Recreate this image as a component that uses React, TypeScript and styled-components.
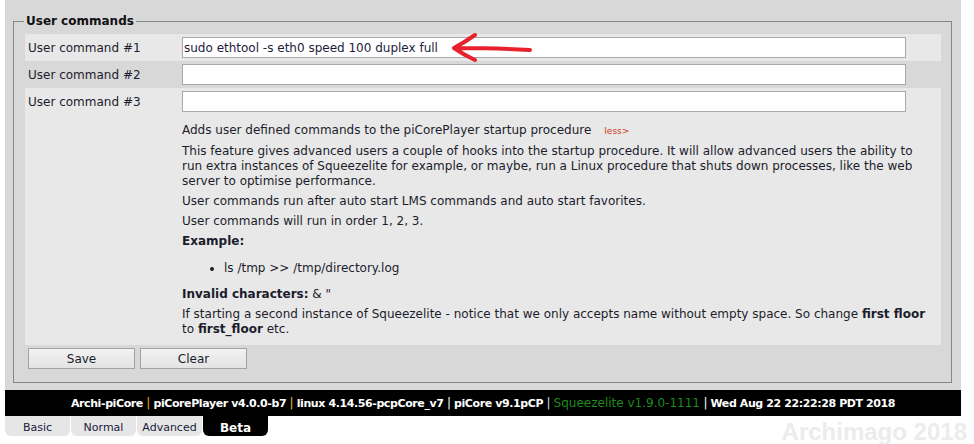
import React from "react";
import styled, { createGlobalStyle } from "styled-components";

const Global = createGlobalStyle`
  html, body { margin: 0; padding: 0; background: #ffffff; }
  body { font-family: "DejaVu Sans", Verdana, sans-serif; font-size: 12px; color: #1c1c2c; }
`;

const Page = styled.div`
  width: 974px;
  height: 444px;
  overflow: hidden;
  padding-left: 5px;
  box-sizing: border-box;
`;

const Panel = styled.div`
  width: 956px;
  background: #d8d8d8;
  padding: 14px 9px 7px 8px;
  box-sizing: border-box;
`;

const FieldSet = styled.fieldset`
  margin: 0;
  border: 1px solid #868686;
  padding: 6px 10px 13px 11px;
  min-width: 0;
`;

const Legend = styled.legend`
  font-weight: bold;
  font-size: 12px;
  padding: 0 2px;
  margin-left: -1px;
  color: #111;
`;

const Row = styled.div<{ $alt?: boolean }>`
  position: relative;
  display: flex;
  align-items: center;
  height: 27px;
  background: ${(p) => (p.$alt ? "#e8e8e8" : "transparent")};
`;

const Label = styled.div`
  width: 154px;
  padding-left: 3px;
  box-sizing: border-box;
  flex: none;
`;

const TextInput = styled.input`
  box-sizing: border-box;
  width: 724px;
  height: 21px;
  margin-left: 3px;
  border: 1px solid #a9a9a9;
  background: #fff;
  padding: 0 1px;
  font-family: "DejaVu Sans", Verdana, sans-serif;
  font-size: 12px;
  color: #1c1c3c;
  outline: none;
`;

const Arrow = styled.svg`
  position: absolute;
  left: 422px;
  top: -3px;
`;

const Group = styled.div`
  background: #e8e8e8;
`;

const Help = styled.div`
  padding: 8px 6px 8px 157px;
  line-height: 15px;
`;

const P = styled.p<{ $last?: boolean }>`
  margin: 0 0 ${(p) => (p.$last ? "0" : "5px")} 0;
`;

const Less = styled.span`
  color: #d23a1e;
  font-size: 9px;
  margin-left: 13px;
`;

const List = styled.ul`
  margin: 12px 0 11px 0;
  padding: 0 0 0 42px;
  list-style: disc outside;
`;

const ButtonRow = styled.div`
  display: flex;
  gap: 5px;
  padding: 3px 0 0 3px;
`;

const Button = styled.button`
  width: 107px;
  height: 21px;
  border: 1px solid #a3a3a3;
  background: linear-gradient(#f2f2f2, #e3e3e3);
  font-family: "DejaVu Sans", Verdana, sans-serif;
  font-size: 12px;
  color: #1c1c2c;
  padding: 0;
`;

const Footer = styled.div`
  width: 956px;
  height: 26px;
  background: #000;
  display: flex;
  align-items: center;
  justify-content: center;
`;

const FooterText = styled.span`
  color: #fff;
  font-family: "DejaVu Sans", sans-serif;
  font-weight: bold;
  font-size: 11px;
  white-space: pre;
  letter-spacing: -0.4px;
`;

const Sep = styled.span<{ $c: string }>`
  color: ${(p) => p.$c};
  font-weight: normal;
  font-size: 12px;
`;

const Green = styled.span`
  color: #1e8a1e;
  font-weight: normal;
  font-size: 12px;
  letter-spacing: 0;
`;

const TabBar = styled.div`
  display: flex;
  align-items: flex-start;
  width: 962px;
`;

const Tab = styled.div<{ $active?: boolean }>`
  width: 65px;
  height: 20px;
  margin-right: 1px;
  border-radius: 0 0 6px 6px;
  display: flex;
  align-items: center;
  justify-content: center;
  padding-top: 3px;
  box-sizing: border-box;
  font-size: ${(p) => (p.$active ? "12px" : "11px")};
  font-weight: ${(p) => (p.$active ? "bold" : "normal")};
  background: ${(p) => (p.$active ? "#000" : "#e6e6e6")};
  color: ${(p) => (p.$active ? "#fff" : "#1a1a3a")};
`;

const Watermark = styled.div`
  margin-left: auto;
  margin-top: 2px;
  font-family: "Liberation Sans", Arial, sans-serif;
  font-weight: bold;
  font-size: 24px;
  color: #ececec;
`;

export default function App() {
  return (
    <Page>
      <Global />
      <Panel>
        <FieldSet>
          <Legend>User commands</Legend>
          <Row $alt>
            <Label>User command #1</Label>
            <TextInput readOnly value="sudo ethtool -s eth0 speed 100 duplex full" />
            <Arrow width="90" height="33" viewBox="0 0 90 33">
              <path
                d="M83 19 Q50 17 8 17 M28 4 Q18 11 7 17 Q17 24 28 29"
                fill="none"
                stroke="#e8222c"
                strokeWidth="4"
                strokeLinecap="round"
                strokeLinejoin="round"
              />
            </Arrow>
          </Row>
          <Row>
            <Label>User command #2</Label>
            <TextInput readOnly value="" />
          </Row>
          <Group>
            <Row>
              <Label>User command #3</Label>
              <TextInput readOnly value="" />
            </Row>
            <Help>
              <P>
                Adds user defined commands to the piCorePlayer startup procedure<Less>less&gt;</Less>
              </P>
              <P>
                This feature gives advanced users a couple of hooks into the startup procedure. It will allow advanced users the ability to run extra instances of Squeezelite for example, or maybe, run a Linux procedure that shuts down processes, like the web server to optimise performance.
              </P>
              <P>User commands run after auto start LMS commands and auto start favorites.</P>
              <P>User commands will run in order 1, 2, 3.</P>
              <P>
                <b>Example:</b>
              </P>
              <List>
                <li>ls /tmp &gt;&gt; /tmp/directory.log</li>
              </List>
              <P>
                <b>Invalid characters:</b> &amp; "
              </P>
              <P $last>
                If starting a second instance of Squeezelite - notice that we only accepts name without empty space. So change <b>first floor</b> to <b>first_floor</b> etc.
              </P>
            </Help>
          </Group>
          <ButtonRow>
            <Button>Save</Button>
            <Button>Clear</Button>
          </ButtonRow>
        </FieldSet>
      </Panel>
      <Footer>
        <FooterText>
          Archi-piCore <Sep $c="#f0a020">|</Sep> piCorePlayer v4.0.0-b7 <Sep $c="#f0b040">|</Sep> linux 4.14.56-pcpCore_v7 <Sep $c="#ffffff">|</Sep> piCore v9.1pCP <Sep $c="#c8d8e8">|</Sep> <Green>Squeezelite v1.9.0-1111</Green> <Sep $c="#ffffff">|</Sep> Wed Aug 22 22:22:28 PDT 2018
        </FooterText>
      </Footer>
      <TabBar>
        <Tab>Basic</Tab>
        <Tab>Normal</Tab>
        <Tab>Advanced</Tab>
        <Tab $active>Beta</Tab>
        <Watermark>Archimago 2018</Watermark>
      </TabBar>
    </Page>
  );
}
